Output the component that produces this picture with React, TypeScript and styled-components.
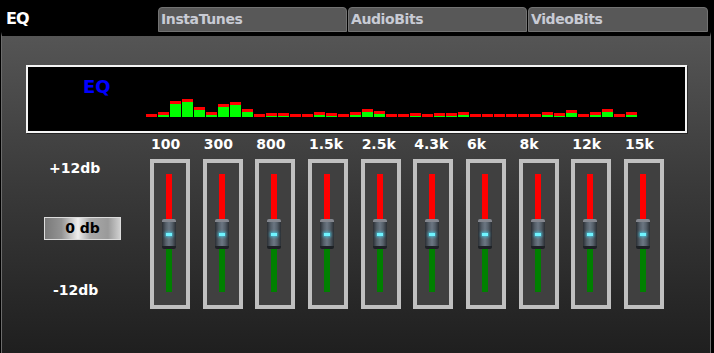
import styled, { createGlobalStyle } from 'styled-components';

const GlobalStyle = createGlobalStyle`
  html, body {
    margin: 0;
    padding: 0;
    background: #000;
  }
  body {
    font-family: "DejaVu Sans", Verdana, sans-serif;
    overflow: hidden;
  }
`;

const bands = ['100', '300', '800', '1.5k', '2.5k', '4.3k', '6k', '8k', '12k', '15k'];

const spectrum = [
  3, 5, 16, 18, 10, 5, 13, 15, 8, 3, 4, 4, 3, 3, 5, 4, 3, 5, 8, 6, 3,
  3, 4, 3, 4, 4, 5, 3, 3, 3, 3, 3, 3, 5, 4, 7, 3, 5, 8, 3, 5,
];

const Screen = styled.div`
  width: 714px;
  height: 353px;
  background: #000;
  display: flex;
  flex-direction: column;
`;

const Header = styled.div`
  height: 32px;
  display: flex;
  align-items: flex-start;
  padding-left: 6px;
`;

const Title = styled.div`
  width: 152px;
  margin-top: 10px;
  color: #fff;
  font-size: 16px;
  line-height: 17px;
  font-weight: bold;
  letter-spacing: -1px;
`;

const TabRow = styled.div`
  display: flex;
  margin-top: 7px;
  gap: 1px;
`;

const Tab = styled.div<{ $w: number }>`
  box-sizing: border-box;
  width: ${(p) => p.$w}px;
  height: 25px;
  padding-left: 2px;
  background: #585858;
  border: 1px solid #727272;
  border-radius: 4px 4px 0 0;
  color: #c8cbd4;
  font-size: 14px;
  line-height: 23px;
  font-weight: bold;
  letter-spacing: -0.4px;
`;

const Panel = styled.div`
  flex: 1;
  margin-left: 1px;
  width: 708px;
  border-left: 1px solid #6c6c6c;
  border-right: 1px solid #6c6c6c;
  border-top: 4px solid #000;
  background: linear-gradient(180deg, #555 0%, #3b3b3b 45%, #1f1f1f 100%);
  display: flex;
  flex-direction: column;
`;

const Display = styled.div`
  box-sizing: border-box;
  margin: 29px 0 0 24px;
  width: 661px;
  height: 68px;
  border: 2px solid #f4f4f4;
  background: #000;
  box-shadow: 1px 1px 0 rgba(0, 0, 0, 0.45);
  display: flex;
`;

const DisplayLabel = styled.div`
  width: 63px;
  margin: 9px 0 0 55px;
  color: #0000ff;
  font-size: 18px;
  line-height: 21px;
  font-weight: bold;
`;

const Spectrum = styled.div`
  display: flex;
  align-items: flex-end;
  gap: 1px;
  margin-bottom: 14px;
  align-self: flex-end;
`;

const SpectrumBar = styled.div<{ $h: number }>`
  width: 11px;
  height: ${(p) => p.$h}px;
  background: linear-gradient(#ff0000 0 3px, #00ff00 3px);
`;

const Controls = styled.div`
  display: flex;
  margin-top: 3px;
`;

const Scale = styled.div`
  width: 148px;
  display: flex;
  flex-direction: column;
  color: #fff;
  font-size: 14px;
  line-height: 16px;
  font-weight: bold;
`;

const ScaleLabel = styled.div<{ $top: number; $left: number }>`
  margin: ${(p) => p.$top}px 0 0 ${(p) => p.$left}px;
`;

const ResetButton = styled.div`
  box-sizing: border-box;
  margin: 41px 0 0 42px;
  width: 77px;
  height: 23px;
  border: 1px solid #dcdcdc;
  background: linear-gradient(
    to right,
    #7a7a7a 0%,
    #939393 22%,
    #eeeeee 44%,
    #a9a9a9 60%,
    #9a9a9a 84%,
    #cfcfcf 100%
  );
  color: #000;
  text-align: center;
  font-size: 14px;
  line-height: 21px;
  font-weight: bold;
`;

const Bands = styled.div`
  display: flex;
  gap: 12.67px;
`;

const Band = styled.div`
  width: 40px;
  display: flex;
  flex-direction: column;
`;

const BandLabel = styled.div`
  padding-left: 1px;
  color: #fff;
  font-size: 14px;
  line-height: 16px;
  font-weight: bold;
  white-space: nowrap;
`;

const Frame = styled.div`
  box-sizing: border-box;
  margin-top: 7px;
  width: 40px;
  height: 150px;
  border: 4px solid #c0c0c0;
  background: #404040;
  display: flex;
  flex-direction: column;
  align-items: center;
  padding: 11px 2px 0 0;
`;

const Track = styled.div<{ $color: string; $h: number }>`
  width: 6px;
  height: ${(p) => p.$h}px;
  background: ${(p) => p.$color};
`;

const Thumb = styled.div`
  box-sizing: border-box;
  position: relative;
  width: 14px;
  height: 30px;
  border-top: 3px solid #84878f;
  border-bottom: 3px solid #1d2125;
  border-radius: 2px;
  background: linear-gradient(
    to right,
    #2a2e33 0%,
    #56606a 28%,
    #6b7682 50%,
    #56606a 72%,
    #2a2e33 100%
  );

  &::after {
    content: '';
    position: absolute;
    left: 4px;
    top: 11px;
    width: 6px;
    height: 3px;
    background: #6ff4ff;
    box-shadow: 0 0 3px 1px rgba(60, 210, 235, 0.75);
  }
`;

export default function App() {
  return (
    <Screen>
      <GlobalStyle />
      <Header>
        <Title>EQ</Title>
        <TabRow>
          <Tab $w={189}>InstaTunes</Tab>
          <Tab $w={179}>AudioBits</Tab>
          <Tab $w={180}>VideoBits</Tab>
        </TabRow>
      </Header>
      <Panel>
        <Display>
          <DisplayLabel>EQ</DisplayLabel>
          <Spectrum>
            {spectrum.map((h, i) => (
              <SpectrumBar key={i} $h={h} />
            ))}
          </Spectrum>
        </Display>
        <Controls>
          <Scale>
            <ScaleLabel $top={24} $left={47}>+12db</ScaleLabel>
            <ResetButton>0 db</ResetButton>
            <ScaleLabel $top={42} $left={51}>-12db</ScaleLabel>
          </Scale>
          <Bands>
            {bands.map((b) => (
              <Band key={b}>
                <BandLabel>{b}</BandLabel>
                <Frame>
                  <Track $color="#ff0000" $h={45} />
                  <Thumb />
                  <Track $color="#008000" $h={43} />
                </Frame>
              </Band>
            ))}
          </Bands>
        </Controls>
      </Panel>
    </Screen>
  );
}
